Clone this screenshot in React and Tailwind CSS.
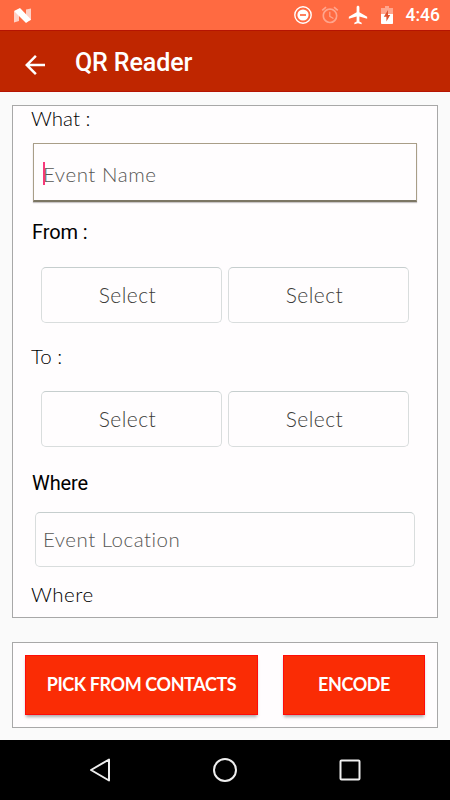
import React from 'react';
import { MdAirplanemodeActive, MdAlarm, MdArrowBack } from 'react-icons/md';

const StatusBar = () => (
  <div className="h-[30px] bg-[#ff6a41] flex items-center justify-between pl-[13px] pr-[10px] text-white">
    <svg width="19" height="15" viewBox="0 0 19 15">
      <path d="M1 3.500L6 1.500V13L1 14.500z" fill="#ffd0c4" />
      <path d="M13 1.500L18 .5V12l-5 2z" fill="#ffd0c4" />
      <path d="M1 3L7 0 18 11.500 13 15z" fill="#fff" />
    </svg>
    <div className="flex items-center">
      <svg width="18" height="18" viewBox="0 0 18 18" fill="none" stroke="#fff">
        <circle cx="9" cy="9" r="8.2" strokeWidth="1.4" />
        <circle cx="9" cy="9" r="5.6" fill="#fff" stroke="none" />
        <path d="M6 9h6" stroke="#ff6a41" strokeWidth="1.7" />
      </svg>
      <MdAlarm className="ml-[8px] size-[20px] text-[#ffa58d]" />
      <MdAirplanemodeActive className="ml-[7px] size-[22px]" />
      <svg className="ml-[12px]" width="12" height="18" viewBox="0 0 12 18">
        <path d="M4 0h4v2h4v6H0V2h4z" fill="#ffa58d" />
        <path d="M0 8h12v9.2q0 .8-.8.8H.8q-.8 0-.8-.8z" fill="#fff" />
        <path d="M7 4L2.8 10.8H5.4V15.500L9.200 9H7z" fill="#e0532f" />
      </svg>
      <span className="ml-[13px] text-[17.500px] leading-[30px] font-medium">4:46</span>
    </div>
  </div>
);

const Header = () => (
  <div className="h-[62px] bg-[#bf2600] border-t border-b border-[#b51403] flex items-center pl-[20px] text-white">
    <MdArrowBack className="mt-[7px] size-[30px]" />
    <h1 className="ml-[25px] mt-[4px] text-[25px] leading-[30px] font-medium tracking-[-0.100px]">QR Reader</h1>
  </div>
);

const SelectBox = () => (
  <button className="w-[181px] h-[56px] rounded-[5px] border border-[#d9dddd] border-t-[#c6cece] pr-[8px] text-[21px] font-light text-[#3c3c39] tracking-[0.450px]">
    Select
  </button>
);

const SelectRow = () => (
  <div className="flex gap-[6px] pl-[9px]">
    <SelectBox />
    <SelectBox />
  </div>
);

const EventForm = () => (
  <div className="h-[513px] border border-[#a8a8a8] bg-[#fffdfe] pl-[19px] font-[Lato,sans-serif] text-[20px] leading-[24px] text-black">
    <div className="-ml-px font-light text-[20.500px]">What :</div>
    <div className="mt-[13px] ml-px w-[384px] h-[59px] border border-[#a99e88] border-b-2 border-b-[#7c7664] shadow-[0_1px_1px_#c9c5c6] flex items-center pt-[3px] pl-[9px] font-light text-[#565654]">
      <span className="w-[2px] h-[23px] -mr-[2px] bg-[#f7397c]"></span>
      <span className="text-[20.500px] tracking-[0.550px]">Event Name</span>
    </div>
    <div className="mt-[18px] font-[Roboto,sans-serif] tracking-[-0.100px]">From :</div>
    <div className="mt-[23px]">
      <SelectRow />
    </div>
    <div className="mt-[21px] -ml-px font-light text-[20.500px]">To :</div>
    <div className="mt-[23px]">
      <SelectRow />
    </div>
    <div className="mt-[24px] font-[Roboto,sans-serif] tracking-[-0.100px]">Where</div>
    <div className="mt-[17px] ml-[3px] w-[380px] h-[55px] rounded-[5px] border border-[#d9dddd] border-t-[#c6cece] flex items-center pl-[7px] pb-px font-light text-[20.500px] text-[#565654] tracking-[0.500px]">
      Event Location
    </div>
    <div className="mt-[15px] -ml-px font-light text-[20.500px] tracking-[0.500px]">Where</div>
  </div>
);

const Actions = () => (
  <div className="mt-[24px] h-[86px] border border-[#a8a8a8] bg-[#fffdfe] flex gap-[25px] pt-[12px] pl-[12px] font-[Lato,sans-serif] text-[18px] font-bold text-white">
    <button className="w-[233px] h-[60px] pb-px bg-[#fa2c05] border border-[#ff0b08] shadow-[0_3px_3px_-1px_#aaa] tracking-[-0.400px]">PICK FROM CONTACTS</button>
    <button className="w-[142px] h-[60px] pb-px bg-[#fa2c05] border border-[#ff0b08] shadow-[0_3px_3px_-1px_#aaa] tracking-[-0.400px]">ENCODE</button>
  </div>
);

const NavBar = () => (
  <div className="h-[60px] bg-black flex items-center justify-between px-[88px]">
    <svg width="24" height="26" viewBox="0 0 24 26" fill="none" stroke="#eee" strokeWidth="2" strokeLinejoin="round">
      <path d="M3 13L21 2.500v21z" />
    </svg>
    <svg width="26" height="26" viewBox="0 0 26 26" fill="none" stroke="#eee" strokeWidth="2">
      <circle cx="13" cy="13" r="11" />
    </svg>
    <svg width="24" height="26" viewBox="0 0 24 26" fill="none" stroke="#eee" strokeWidth="2">
      <rect x="2.500" y="3.500" width="19" height="19" rx="1" />
    </svg>
  </div>
);

const App = () => {
  return (
    <div className="w-[450px] h-[800px] overflow-hidden flex flex-col bg-[#fafafa] font-[Roboto,sans-serif]">
      <StatusBar />
      <Header />
      <main className="flex-1 px-[12px] pt-[13px]">
        <EventForm />
        <Actions />
      </main>
      <NavBar />
    </div>
  );
};

export default App;
